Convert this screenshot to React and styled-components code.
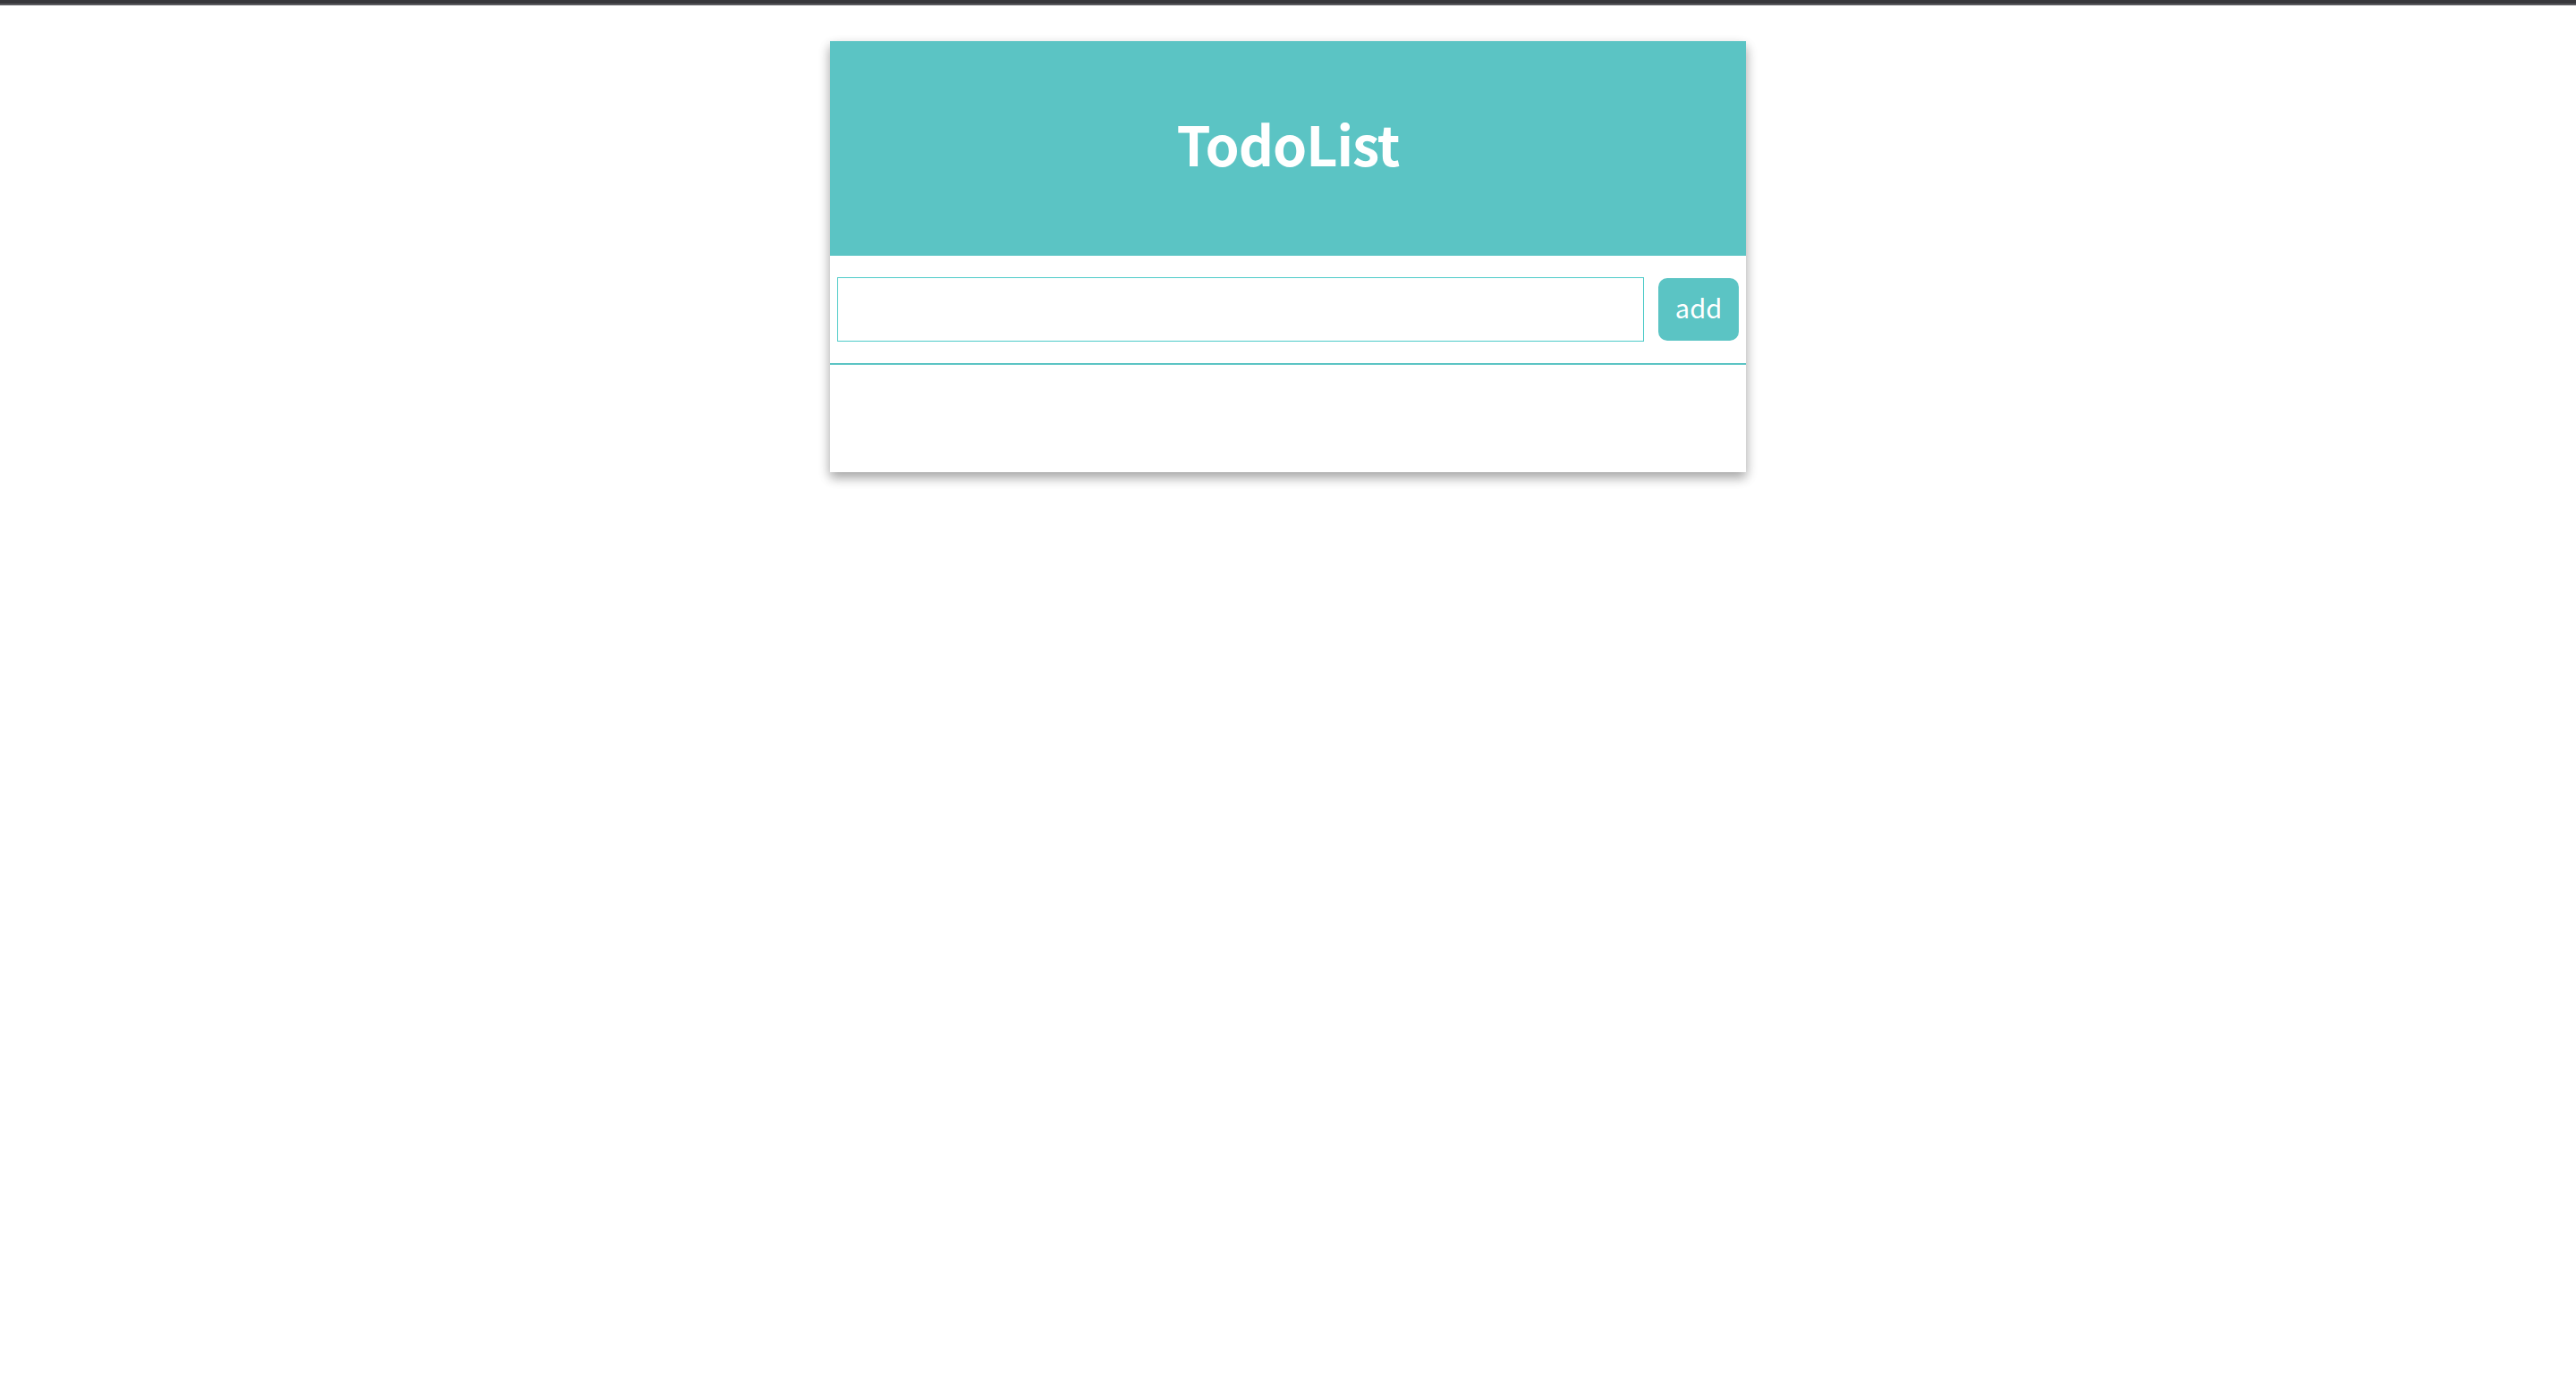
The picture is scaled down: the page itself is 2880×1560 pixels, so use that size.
import React, { useState } from "react";
import styled, { createGlobalStyle } from "styled-components";

const GlobalStyle = createGlobalStyle`
  html, body { margin: 0; padding: 0; background: #ffffff; }
  body { font-family: "Noto Sans CJK KR", "Noto Sans", sans-serif; }
  * { box-sizing: border-box; }
`;

const TEAL = "#5bc4c4";

const TopBar = styled.div`
  height: 6px;
  background: #38383c;
  border-bottom: 2px solid #5a5a5e;
`;

const Page = styled.main`
  display: flex;
  justify-content: center;
  align-items: flex-start;
  padding: 40px 0 80px;
  min-height: calc(100vh - 6px);
`;

const Card = styled.section`
  width: 1024px;
  background: #ffffff;
  box-shadow: 0 6px 12px rgba(0, 0, 0, 0.18), 0 6px 12px rgba(0, 0, 0, 0.22);
  display: flex;
  flex-direction: column;
`;

const Header = styled.header`
  height: 240px;
  background: ${TEAL};
  display: flex;
  align-items: center;
  justify-content: center;
  padding-bottom: 14px;
`;

const Title = styled.h1`
  margin: 0;
  color: #ffffff;
  font-size: 61px;
  font-weight: 700;
  letter-spacing: -1px;
  line-height: 1;
`;

const Form = styled.form`
  display: flex;
  align-items: center;
  gap: 16px;
  padding: 24px 8px;
  border-bottom: 2px solid ${TEAL};
`;

const Input = styled.input`
  flex: 1;
  height: 72px;
  border: 1px solid #4ecbc8;
  padding: 0 16px;
  font-size: 28px;
  font-family: inherit;
  outline: none;
`;

const AddButton = styled.button`
  width: 90px;
  height: 70px;
  border: none;
  border-radius: 10px;
  background: ${TEAL};
  color: #ffffff;
  font-family: inherit;
  font-size: 29px;
  padding: 0 0 7px;
  cursor: pointer;
`;

const List = styled.ul`
  margin: 0;
  padding: 0;
  list-style: none;
  min-height: 120px;
`;

export default function App() {
  const [value, setValue] = useState("");
  return (
    <>
      <GlobalStyle />
      <TopBar />
      <Page>
        <Card>
          <Header>
            <Title>TodoList</Title>
          </Header>
          <Form onSubmit={(e) => e.preventDefault()}>
            <Input value={value} onChange={(e) => setValue(e.target.value)} />
            <AddButton type="submit">add</AddButton>
          </Form>
          <List />
        </Card>
      </Page>
    </>
  );
}
